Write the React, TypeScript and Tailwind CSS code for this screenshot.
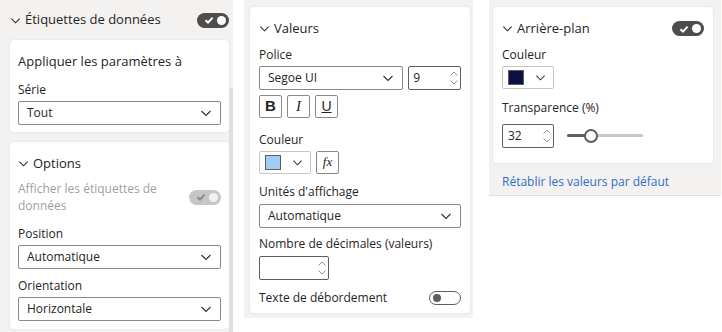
import React from "react"

const font = { fontFamily: '"Open Sans", "Noto Sans", sans-serif' }

function Chevron({ className = "" }: { className?: string }) {
  return (
    <svg viewBox="0 0 12 12" className={className} fill="none" stroke="currentColor" strokeWidth="1.1">
      <path d="M1.5 4 L6 8.5 L10.5 4" />
    </svg>
  )
}

function Toggle({ on = true, disabled = false }: { on?: boolean; disabled?: boolean }) {
  if (!on) {
    return (
      <div className="w-[32px] h-[14px] rounded-full border border-[#605e5c] bg-white flex items-center px-[3px]">
        <div className="w-[8px] h-[8px] rounded-full bg-[#605e5c]" />
      </div>
    )
  }
  return (
    <div
      className={`w-[32px] h-[15px] rounded-full flex items-center justify-end gap-[3px] pr-[3px] ${
        disabled ? "bg-[#c8c6c4]" : "bg-[#4f4d4b]"
      }`}
    >
      <svg viewBox="0 0 10 10" className="w-[10px] h-[10px]" fill="none" stroke={disabled ? "#8a8886" : "white"} strokeWidth="2">
        <path d="M1.5 5.2 L4 7.6 L8.6 2.6" />
      </svg>
      <div className={`w-[9px] h-[9px] rounded-full ${disabled ? "bg-[#f3f2f1]" : "bg-white"}`} />
    </div>
  )
}

function Select({ value, className = "" }: { value: string; className?: string }) {
  return (
    <div className={`h-[24px] border border-[#8a8886] rounded-[2px] bg-white flex items-center justify-between pl-[8px] pr-[8px] ${className}`}>
      <span className="text-[12px] text-[#252423]">{value}</span>
      <Chevron className="w-[12px] h-[12px] text-[#323130]" />
    </div>
  )
}

function Spinner({ value, className = "" }: { value: string; className?: string }) {
  return (
    <div className={`h-[24px] border border-[#605e5c] rounded-[2px] bg-white flex items-center justify-between pl-[4px] pr-[2px] ${className}`}>
      <span className="text-[12px] text-[#252423]">{value}</span>
      <div className="flex flex-col gap-[4px] text-[#8a8886]">
        <svg viewBox="0 0 8 5" className="w-[8px] h-[5px]" fill="none" stroke="currentColor" strokeWidth="0.9">
          <path d="M0.5 4.5 L4 1 L7.5 4.5" />
        </svg>
        <svg viewBox="0 0 8 5" className="w-[8px] h-[5px]" fill="none" stroke="currentColor" strokeWidth="0.9">
          <path d="M0.5 0.5 L4 4 L7.5 0.5" />
        </svg>
      </div>
    </div>
  )
}

function ColorPicker({ color }: { color: string }) {
  return (
    <div className="w-[52px] h-[23px] border border-[#c8c6c4] rounded-[2px] bg-white flex items-center justify-between pl-[5px] pr-[7px]">
      <div className="w-[16px] h-[15px] border border-[#605e5c]" style={{ background: color }} />
      <Chevron className="w-[11px] h-[11px] text-[#323130]" />
    </div>
  )
}

function Label({ children, className = "" }: { children: React.ReactNode; className?: string }) {
  return <div className={`text-[12px] text-[#252423] leading-[16px] ${className}`}>{children}</div>
}

function SectionHeader({ title, toggle }: { title: string; toggle?: boolean }) {
  return (
    <div className="flex items-center justify-between">
      <div className="flex items-center gap-[4px]">
        <Chevron className="w-[11px] h-[11px] text-[#252423]" />
        <span className="text-[13px] text-[#252423]">{title}</span>
      </div>
      {toggle && <Toggle />}
    </div>
  )
}

function Card({ children, className = "" }: { children: React.ReactNode; className?: string }) {
  return (
    <div className={`bg-white rounded-[4px] shadow-[0_0_2px_rgba(0,0,0,0.12)] ${className}`}>{children}</div>
  )
}

export default function App() {
  return (
    <div className="w-[722px] h-[332px] bg-white flex items-start overflow-hidden" style={font}>
      {/* Étiquettes de données */}
      <div className="w-[233px] h-[332px] bg-[#f3f2f1] relative pl-[10px] pr-[4px]">
        <div className="absolute right-0 top-[88px] w-[4px] h-[244px] bg-[#e1dfdd]" />
        <div className="h-[40px] flex items-center">
          <div className="flex-1">
            <SectionHeader title="Étiquettes de données" toggle />
          </div>
        </div>
        <Card className="px-[8px] pt-[12px] pb-[7px]">
          <div className="text-[13px] text-[#252423]">Appliquer les paramètres à</div>
          <Label className="mt-[10px] mb-[3px]">Série</Label>
          <Select value="Tout" />
        </Card>
        <Card className="mt-[10px] px-[8px] pt-[12px] pb-[8px]">
          <SectionHeader title="Options" />
          <div className="flex items-center justify-between mt-[7px]">
            <div className="text-[12px] leading-[17px] text-[#a19f9d]">
              Afficher les étiquettes de
              <br />
              données
            </div>
            <Toggle disabled />
          </div>
          <Label className="mt-[12px] mb-[3px]">Position</Label>
          <Select value="Automatique" />
          <Label className="mt-[9px] mb-[3px]">Orientation</Label>
          <Select value="Horizontale" />
        </Card>
      </div>

      {/* Valeurs */}
      <div className="ml-[11px] w-[229px] h-[318px] bg-[#f3f2f1] pl-[6px] pr-[3px] pt-[7px]">
        <Card className="h-[306px] px-[9px] pt-[12px]">
          <SectionHeader title="Valeurs" />
          <Label className="mt-[8px] mb-[3px]">Police</Label>
          <div className="flex gap-[5px]">
            <Select value="Segoe UI" className="w-[145px]" />
            <Spinner value="9" className="w-[53px]" />
          </div>
          <div className="flex gap-[5px] mt-[5px]">
            <div className="w-[23px] h-[23px] border border-[#8a8886] rounded-[2px] flex items-center justify-center text-[15px] font-bold text-[#252423]" style={{ fontFamily: '"Liberation Sans", sans-serif' }}>
              B
            </div>
            <div className="w-[23px] h-[23px] border border-[#8a8886] rounded-[2px] flex items-center justify-center text-[15px] italic text-[#252423]" style={{ fontFamily: '"Liberation Serif", serif' }}>
              I
            </div>
            <div className="w-[23px] h-[23px] border border-[#8a8886] rounded-[2px] flex items-center justify-center text-[14px] underline text-[#252423]" style={{ fontFamily: '"Liberation Sans", sans-serif' }}>
              U
            </div>
          </div>
          <Label className="mt-[14px] mb-[3px]">Couleur</Label>
          <div className="flex gap-[5px]">
            <ColorPicker color="#a0cdf7" />
            <div className="w-[23px] h-[23px] border border-[#8a8886] rounded-[2px] flex items-center justify-center text-[13px] italic text-[#252423]" style={{ fontFamily: '"Liberation Serif", serif' }}>
              fx
            </div>
          </div>
          <Label className="mt-[10px] mb-[4px]">Unités d'affichage</Label>
          <Select value="Automatique" />
          <Label className="mt-[8px] mb-[4px]">Nombre de décimales (valeurs)</Label>
          <Spinner value="" className="w-[70px]" />
          <div className="flex items-center justify-between mt-[10px]">
            <Label>Texte de débordement</Label>
            <Toggle on={false} />
          </div>
        </Card>
      </div>

      {/* Arrière-plan */}
      <div className="ml-[16px] w-[232px] h-[196px] bg-[#f3f2f1] border-b border-[#e1dfdd] pl-[4px] pr-[8px] pt-[7px]">
        <Card className="h-[156px] px-[9px] pt-[12px]">
          <SectionHeader title="Arrière-plan" toggle />
          <Label className="mt-[8px] mb-[3px]">Couleur</Label>
          <ColorPicker color="#0b1145" />
          <Label className="mt-[11px] mb-[8px]">Transparence (%)</Label>
          <div className="flex items-center gap-[13px]">
            <Spinner value="32" className="w-[52px] pl-[5px]" />
            <div className="relative w-[76px] h-[14px] flex items-center">
              <div className="w-full h-[3px] bg-[#c8c6c4] rounded-full" />
              <div className="absolute left-0 w-[24px] h-[3px] bg-[#605e5c] rounded-full" />
              <div className="absolute left-[17px] w-[14px] h-[14px] rounded-full bg-white border-[2px] border-[#605e5c]" />
            </div>
          </div>
        </Card>
        <div className="mt-[10px] pl-[9px] text-[12px] text-[#2f6fc8]">Rétablir les valeurs par défaut</div>
      </div>
    </div>
  )
}
